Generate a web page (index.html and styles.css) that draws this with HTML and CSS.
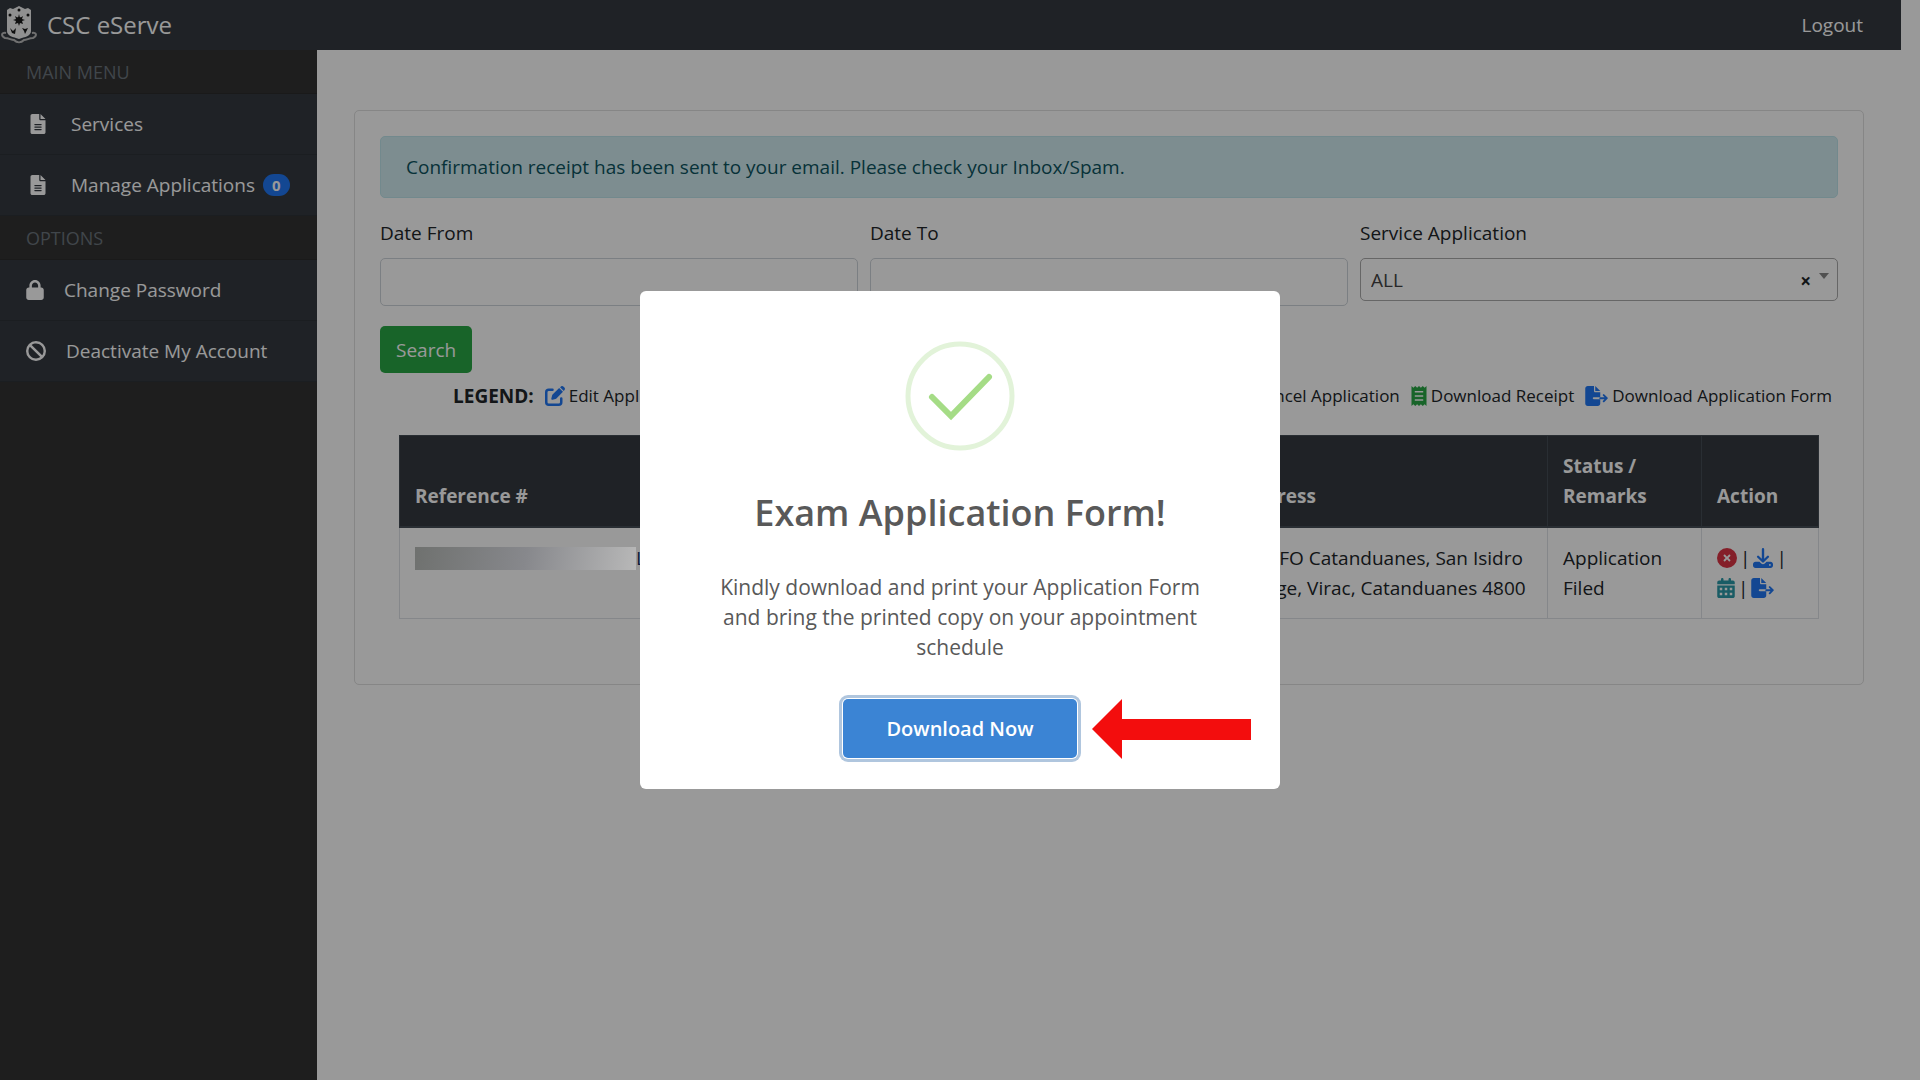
FILE: index.html
```html
<!DOCTYPE html>
<html lang="en">
<head>
    <meta charset="utf-8">
    <title>CSC eServe</title>
    <link rel="stylesheet" href="styles.css">
</head>
<body>
    <!-- icon set -->
    <svg class="sprite" aria-hidden="true">
        <symbol id="i-file" viewBox="0 0 384 512"><path fill-rule="evenodd" d="M48 0C20 0 0 20 0 48V464c0 28 20 48 48 48H336c28 0 48-20 48-48V160H256c-18 0-32-14-32-32V0H48zM256 0V128H384L256 0zM112 256H272a14 14 0 0 1 0 30H112a14 14 0 0 1 0-30zm0 64H272a14 14 0 0 1 0 30H112a14 14 0 0 1 0-30zm0 64H272a14 14 0 0 1 0 30H112a14 14 0 0 1 0-30z"/></symbol>
        <symbol id="i-lock" viewBox="0 0 448 512"><path d="M144 144v48H304V144c0-44.2-35.8-80-80-80s-80 35.8-80 80zM80 192V144C80 64.5 144.5 0 224 0s144 64.5 144 144v48h16c35.3 0 64 28.7 64 64V448c0 35.3-28.7 64-64 64H64c-35.3 0-64-28.7-64-64V256c0-35.3 28.7-64 64-64H80z"/></symbol>
        <symbol id="i-ban" viewBox="0 0 512 512"><path d="M367.2 412.5L99.5 144.8C77.1 176.1 64 214.5 64 256c0 106 86 192 192 192c41.5 0 79.9-13.1 111.2-35.5zm45.3-45.3C434.9 335.9 448 297.5 448 256c0-106-86-192-192-192c-41.5 0-79.9 13.1-111.2 35.5L412.5 367.2zM0 256a256 256 0 1 1 512 0A256 256 0 1 1 0 256z"/></symbol>
        <symbol id="i-edit" viewBox="0 0 512 512"><path d="M192 96H96c-36 0-64 28-64 64V416c0 36 28 64 64 64H352c36 0 64-28 64-64V320" fill="none" stroke="currentColor" stroke-width="64" stroke-linecap="round"/><path d="M362 52L460 150 292 318c-6 6-14 10-22 12l-78 20c-18 4-34-12-30-30l20-78c2-8 6-16 12-22zM385 30L410 12c24-18 48-12 66 6l20 20c18 18 20 46 2 66L482 128z"/></symbol>
        <symbol id="i-receipt" viewBox="0 0 384 512"><path fill-rule="evenodd" d="M0 0L48 44 96 0 144 44 192 0 240 44 288 0 336 44 384 0V512L336 468 288 512 240 468 192 512 144 468 96 512 48 468 0 512zM84 130V168H300V130zM84 236V274H300V236zM84 342V380H300V342z"/></symbol>
        <symbol id="i-export" viewBox="0 0 576 512"><path d="M0 64C0 29 29 0 64 0H224V128c0 18 14 32 32 32H384V288H216c-32 0-32 48 0 48H384V448c0 35-29 64-64 64H64c-35 0-64-29-64-64zM256 0L384 128H256z"/><path d="M384 312H544M472 232L552 312 472 392" fill="none" stroke="currentColor" stroke-width="48" stroke-linecap="round" stroke-linejoin="round"/></symbol>
        <symbol id="i-cancel" viewBox="0 0 512 512"><path fill-rule="evenodd" d="M0 256a256 256 0 1 1 512 0A256 256 0 1 1 0 256zM175 209L222 256 175 303c-22 22 12 56 34 34L256 290 303 337c22 22 56-12 34-34L290 256 337 209c22-22-12-56-34-34L256 222 209 175c-22-22-56 12-34 34z"/></symbol>
        <symbol id="i-download" viewBox="0 0 512 512"><path d="M256 32V330M130 224L256 346 382 224" fill="none" stroke="currentColor" stroke-width="60" stroke-linecap="round" stroke-linejoin="round"/><path fill-rule="evenodd" d="M64 352H165L211 398c25 25 65 25 90 0L347 352H448c35 0 64 29 64 64V448c0 35-29 64-64 64H64c-35 0-64-29-64-64V416c0-35 29-64 64-64zM432 408a24 24 0 1 0 0 48 24 24 0 1 0 0-48z"/></symbol>
        <symbol id="i-calendar" viewBox="0 0 448 512"><path fill-rule="evenodd" d="M96 32c0-42 64-42 64 0V64H288V32c0-42 64-42 64 0V64H400c26 0 48 22 48 48V160H0V112C0 86 22 64 48 64H96zM0 192H448V464c0 26-22 48-48 48H48c-26 0-48-22-48-48zM64 248V312H128V248zM192 248V312H256V248zM320 248V312H384V248zM64 376V440H128V376zM192 376V440H256V376zM320 376V440H384V376z"/></symbol>
    </svg>

    <header class="navbar">
        <a class="brand" href="#">
            <svg class="logo" viewBox="0 0 36 38" aria-hidden="true">
                <path d="M5 27C0 26 0 30 4 32 8 32 10 34 13 34 16 37 20 37 23 34 26 34 28 32 32 32 36 30 36 26 31 27" fill="none" stroke="#bbb" stroke-width="2"/>
                <path d="M6 4L9 2 12 3 18 0 24 3 27 2 30 4V25C30 30 24 31 18 33 12 31 6 30 6 25z" fill="#f0f0f0"/>
                <g fill="#1a1a1a">
                    <circle cx="9" cy="9" r="1.5"/><circle cx="18" cy="4" r="1.5"/><circle cx="27" cy="9" r="1.5"/>
                    <circle cx="18" cy="14" r="3"/>
                    <path d="M18 8L19 12 22 10 21 13 24 14 21 15 22 18 19 17 18 20 17 17 14 18 15 15 12 14 15 13 14 10 17 12z"/>
                    <path d="M9 22L12 25 15 22 14 28 11 27zM21 22L24 23 27 22 24 28 23 25z"/>
                </g>
            </svg>
            CSC eServe
        </a>
        <a class="logout" href="#">Logout</a>
    </header>

    <div class="wrapper">
        <nav class="sidebar">
            <div class="menu">
                <div class="menu-title">MAIN MENU</div>
                <a class="menu-item wide" href="#"><svg class="icon file"><use href="#i-file"/></svg>Services</a>
                <a class="menu-item wide" href="#"><svg class="icon file"><use href="#i-file"/></svg>Manage Applications <span class="badge">0</span></a>
                <div class="menu-title">OPTIONS</div>
                <a class="menu-item" href="#"><svg class="icon lock"><use href="#i-lock"/></svg>Change Password</a>
                <a class="menu-item" href="#"><svg class="icon"><use href="#i-ban"/></svg>Deactivate My Account</a>
            </div>
        </nav>

        <main class="content">
            <div class="card">
                <div class="alert">Confirmation receipt has been sent to your email. Please check your Inbox/Spam.</div>

                <form class="filters">
                    <div class="field">
                        <label for="dateFrom">Date From</label>
                        <input type="text" id="dateFrom">
                    </div>
                    <div class="field">
                        <label for="dateTo">Date To</label>
                        <input type="text" id="dateTo">
                    </div>
                    <div class="field">
                        <label for="service">Service Application</label>
                        <div class="select-box">
                            <select id="service"><option>ALL</option></select>
                            <span class="select-clear">×</span>
                            <span class="select-arrow"></span>
                        </div>
                    </div>
                    <button class="btn-search" type="button">Search</button>
                </form>

                <div class="legend">
                    <b>LEGEND:</b>
                    <span class="legend-item first"><svg class="icon blue"><use href="#i-edit"/></svg>Edit Application</span>
                    <span class="legend-item"><svg class="icon red"><use href="#i-cancel"/></svg>Cancel Application</span>
                    <span class="legend-item"><svg class="icon file green"><use href="#i-receipt"/></svg>Download Receipt</span>
                    <span class="legend-item"><svg class="icon export blue"><use href="#i-export"/></svg>Download Application Form</span>
                </div>

                <div class="table-box">
                    <table>
                        <colgroup>
                            <col class="col-ref">
                            <col class="col-service">
                            <col class="col-address">
                            <col class="col-status">
                            <col class="col-action">
                        </colgroup>
                        <thead>
                            <tr>
                                <th>Reference #</th>
                                <th>Service</th>
                                <th>Address</th>
                                <th>Status / Remarks</th>
                                <th>Action</th>
                            </tr>
                        </thead>
                        <tbody>
                            <tr>
                                <td><div class="ref"><span class="masked"></span>L</div></td>
                                <td></td>
                                <td>CSC FO Catanduanes, San Isidro Village, Virac, Catanduanes 4800</td>
                                <td>Application Filed</td>
                                <td>
                                    <div class="actions">
                                        <a href="#" aria-label="Cancel"><svg class="icon red"><use href="#i-cancel"/></svg></a>|
                                        <a href="#" aria-label="Download"><svg class="icon blue"><use href="#i-download"/></svg></a>|
                                    </div>
                                    <div class="actions">
                                        <a href="#" aria-label="Schedule"><svg class="icon lock teal"><use href="#i-calendar"/></svg></a>|
                                        <a href="#" aria-label="Application form"><svg class="icon export blue"><use href="#i-export"/></svg></a>
                                    </div>
                                </td>
                            </tr>
                        </tbody>
                    </table>
                </div>
            </div>
        </main>
    </div>

    <div class="overlay">
        <div class="modal" role="dialog" aria-labelledby="modalTitle">
            <svg class="success" viewBox="0 0 110 110" aria-hidden="true">
                <circle cx="55" cy="55" r="52" fill="none" stroke="#e2f3d9" stroke-width="5"/>
                <path d="M27 56L46 75 84 36" fill="none" stroke="#a5dc86" stroke-width="6" stroke-linecap="round"/>
            </svg>
            <h2 id="modalTitle">Exam Application Form!</h2>
            <p>Kindly download and print your Application Form and bring the printed copy on your appointment schedule</p>
            <div class="modal-actions">
                <button class="btn-download" type="button">Download Now</button>
                <svg class="arrow" viewBox="0 0 159 60" aria-hidden="true"><path d="M0 30L30 0V20H159V41H30V60z" fill="#f30d0d"/></svg>
            </div>
        </div>
    </div>
</body>
</html>
```
FILE: styles.css
```css
* {
    box-sizing: border-box;
}
html {
    font-family: "Segoe UI", "Open Sans", "Noto Sans", sans-serif;
    font-size: 19px;
    line-height: 30px;
    color: #212529;
}
body {
    margin: 0;
    padding-right: 19px;
    min-height: 100vh;
    display: flex;
    flex-direction: column;
    overflow: hidden;
}
a {
    color: inherit;
    text-decoration: none;
}
.sprite {
    position: absolute;
    width: 0;
    height: 0;
}
.icon {
    width: 20px;
    height: 20px;
    fill: currentColor;
    flex: none;
}
.icon.file {
    width: 16px;
}
.icon.lock {
    width: 18px;
}
.icon.export {
    width: 23px;
}
.blue {
    color: #2077f4;
}
.red {
    color: #dc3545;
}
.green {
    color: #28a745;
}
.teal {
    color: #2b9aa8;
}

/* top bar */
.navbar {
    height: 50px;
    padding: 0 38px 0 1px;
    display: flex;
    align-items: center;
    justify-content: space-between;
    background: #343a40;
    color: #fff;
}
.brand {
    display: flex;
    align-items: center;
    gap: 10px;
    font-size: 24px;
}
.logo {
    width: 36px;
    height: 38px;
}

/* sidebar */
.wrapper {
    flex: 1;
    display: flex;
}
.sidebar {
    width: 317px;
    flex: none;
    background: #333;
}
.menu {
    color: #fff;
}
.menu-title {
    height: 44px;
    padding: 0 26px;
    line-height: 44px;
    font-size: 18px;
    color: #6c757d;
    border-bottom: 1px solid #2c2c2c;
}
.menu-item {
    height: 61px;
    padding: 0 26px;
    display: flex;
    align-items: center;
    gap: 20px;
    background: #343a40;
    border-bottom: 1px solid #2e3338;
}
.menu-item.wide {
    padding-left: 30px;
    gap: 25px;
}
.badge {
    margin-left: -17px;
    padding: 0 9px;
    border-radius: 12px;
    background: #2077f4;
    font-size: 15px;
    font-weight: bold;
    line-height: 22px;
}

/* content */
.content {
    flex: 1;
    padding: 60px 37px;
}
.card {
    padding: 25px 25px 65px;
    border: 1px solid #dfdfdf;
    border-radius: 5px;
}
.alert {
    padding: 15px 25px;
    border: 1px solid #bee5eb;
    border-radius: 5px;
    background: #d1ecf1;
    color: #0c5460;
}
.filters {
    display: grid;
    grid-template-columns: repeat(3, 1fr);
    gap: 20px 12px;
    margin-top: 20px;
}
.field label {
    display: block;
    margin-bottom: 10px;
}
.field input, .field select {
    display: block;
    width: 100%;
    height: 48px;
    padding: 0 10px;
    border: 1px solid #ced4da;
    border-radius: 5px;
    background: #fff;
    font: inherit;
    color: #444;
}
.field select {
    height: 43px;
    border-color: #aaa;
    appearance: none;
}
.select-box {
    position: relative;
}
.select-clear {
    position: absolute;
    right: 27px;
    top: 8px;
    font-weight: bold;
}
.select-arrow {
    position: absolute;
    right: 9px;
    top: 15px;
    border: 5px solid transparent;
    border-top: 6px solid #888;
}
.btn-search {
    justify-self: start;
    height: 47px;
    padding: 0 16px;
    border: 0;
    border-radius: 5px;
    background: #28a745;
    color: #fff;
    font: inherit;
}
.legend {
    display: flex;
    align-items: center;
    gap: 11px;
    padding: 8px 6px 0 73px;
    font-size: 17px;
}
.legend b {
    font-size: 19px;
}
.legend-item {
    display: flex;
    align-items: center;
    gap: 4px;
}
.legend-item.first {
    margin-right: auto;
}

/* applications table */
.table-box {
    padding: 24px 19px 0;
}
table {
    width: 100%;
    table-layout: fixed;
    border-collapse: collapse;
}
th, td {
    padding: 15px;
    border: 1px solid #dee2e6;
    text-align: left;
    vertical-align: top;
}
th {
    background: #343a40;
    border-color: #454d55;
    border-bottom-width: 2px;
    color: #fff;
    vertical-align: bottom;
}
.col-ref {
    width: 22%;
}
.col-address {
    width: 323px;
}
.col-status {
    width: 154px;
}
.col-action {
    width: 117px;
}
.ref {
    display: flex;
    align-items: center;
    color: #1a2f66;
}
/* the mask stays above the dimmed page */
.masked {
    position: relative;
    z-index: 1;
    width: 221px;
    height: 23px;
    background: linear-gradient(100deg, #6f716f, #87888c 50%, #b8b8b8);
}
.actions {
    display: flex;
    align-items: center;
    gap: 3px;
}
.actions a {
    display: flex;
}

/* success dialog */
.overlay {
    position: fixed;
    inset: 0;
    display: flex;
    align-items: center;
    justify-content: center;
    background: rgba(0, 0, 0, 0.4);
}
.modal {
    width: 640px;
    padding: 50px 25px 31px;
    border-radius: 6px;
    background: #fff;
    color: #595959;
    text-align: center;
}
.success {
    display: block;
    width: 110px;
    height: 110px;
    margin: 0 auto 37px;
}
.modal h2 {
    margin: 0;
    font-size: 36px;
    font-weight: 600;
    line-height: 50px;
}
.modal p {
    margin: 34px 40px 37px;
    font-size: 21px;
}
.modal-actions {
    position: relative;
}
.btn-download {
    height: 59px;
    padding: 0 43px;
    border: 0;
    border-radius: 5px;
    background: #3b84d4;
    box-shadow: 0 0 0 1px #fff, 0 0 0 4px #b0c6de;
    color: #fff;
    font: inherit;
    font-size: 20px;
    font-weight: 600;
}
.arrow {
    position: absolute;
    right: 4px;
    top: 0;
    width: 159px;
    height: 60px;
}
```
